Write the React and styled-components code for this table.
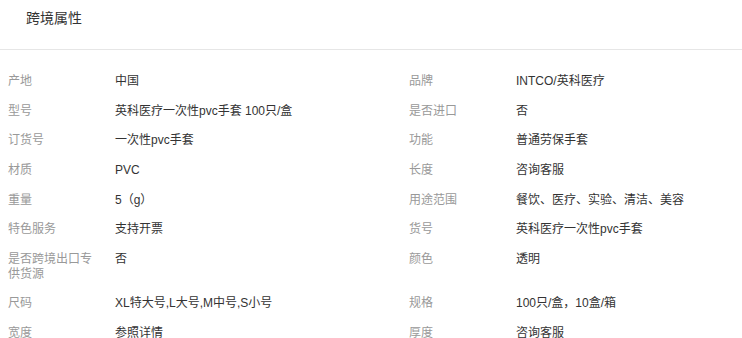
import React from "react";
import styled, { createGlobalStyle } from "styled-components";

const Global = createGlobalStyle`
  html, body { margin: 0; padding: 0; background: #fff; }
  body { font-family: "Liberation Sans", "Noto Sans CJK SC", sans-serif; }
`;

const Panel = styled.section`
  width: 742px;
  background: #fff;
`;

const Header = styled.div`
  height: 50px;
  border-bottom: 1px solid #e6e6e6;
  padding: 8px 0 0 26px;
  box-sizing: border-box;
`;

const Title = styled.h2`
  margin: 0;
  font-size: 14px;
  font-weight: normal;
  line-height: 20px;
  color: #333;
`;

const Grid = styled.div`
  display: grid;
  grid-template-columns: 401px 1fr;
  padding: 17px 0 0 8px;
`;

const Cell = styled.div`
  display: flex;
  align-items: flex-start;
  padding: 7.3px 0;
  font-size: 12px;
  line-height: 15px;
`;

const Label = styled.span`
  flex: 0 0 90px;
  margin-right: 17px;
  color: #999;
`;

const Value = styled.span`
  color: #333;
`;

const rows = [
  ["产地", "中国", "品牌", "INTCO/英科医疗"],
  ["型号", "英科医疗一次性pvc手套 100只/盒", "是否进口", "否"],
  ["订货号", "一次性pvc手套", "功能", "普通劳保手套"],
  ["材质", "PVC", "长度", "咨询客服"],
  ["重量", "5（g）", "用途范围", "餐饮、医疗、实验、清洁、美容"],
  ["特色服务", "支持开票", "货号", "英科医疗一次性pvc手套"],
  ["是否跨境出口专供货源", "否", "颜色", "透明"],
  ["尺码", "XL特大号,L大号,M中号,S小号", "规格", "100只/盒，10盒/箱"],
  ["宽度", "参照详情", "厚度", "咨询客服"],
];

export default function App() {
  return (
    <Panel>
      <Global />
      <Header>
        <Title>跨境属性</Title>
      </Header>
      <Grid>
        {rows.map(([l1, v1, l2, v2]) => (
          <React.Fragment key={l1}>
            <Cell>
              <Label>{l1}</Label>
              <Value>{v1}</Value>
            </Cell>
            <Cell>
              <Label>{l2}</Label>
              <Value>{v2}</Value>
            </Cell>
          </React.Fragment>
        ))}
      </Grid>
    </Panel>
  );
}
